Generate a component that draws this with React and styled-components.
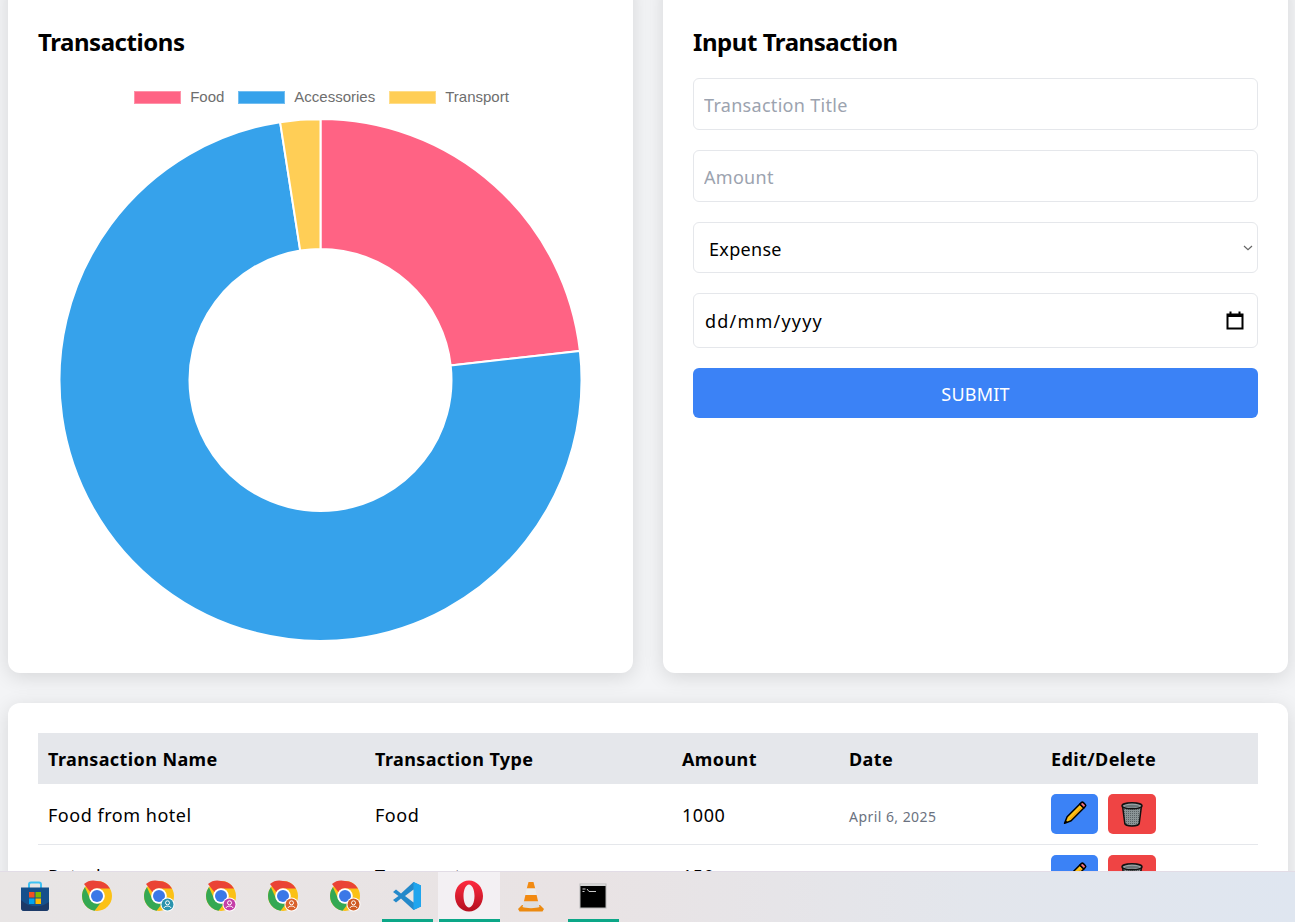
import React from "react";
import styled, { createGlobalStyle } from "styled-components";

const GlobalStyle = createGlobalStyle`
  html, body {
    margin: 0;
    height: 100%;
    overflow: hidden;
    background: #f3f4f6;
    font-family: "Noto Sans", "Open Sans", Arial, sans-serif;
    color: #000;
  }
  * { box-sizing: border-box; }
`;

const Page = styled.main`
  display: flex;
  flex-direction: column;
  gap: 30px;
  margin-top: -24px;
  padding: 0 7px 0 8px;
`;

const TopGrid = styled.div`
  display: grid;
  grid-template-columns: 625px 625px;
  gap: 30px;
`;

const Card = styled.section`
  background: #fff;
  border-radius: 12px;
  box-shadow: 0 4px 20px rgba(0, 0, 0, 0.12);
  padding: ${(p) => p.$padding || "30px"};
`;

const Heading = styled.h2`
  margin: 0 0 20px;
  font-size: 24px;
  line-height: 32px;
  font-weight: 700;
  letter-spacing: -0.45px;
`;

const ChartArea = styled.div`
  display: flex;
  flex-direction: column;
  align-items: center;
`;

const Legend = styled.div`
  display: flex;
  justify-content: center;
  gap: 14px;
  height: 42px;
  padding: 10px 0 0 2px;
  font-family: "Liberation Sans", Arial, sans-serif;
  font-size: 15px;
  color: #6e6e6e;
`;

const LegendItem = styled.div`
  display: flex;
  align-items: flex-start;
  gap: 9px;
  line-height: 17px;
`;

const LegendBox = styled.span`
  width: 47px;
  height: 13px;
  margin-top: 3px;
  background: ${(p) => p.$color};
  border: 1px solid rgba(255, 255, 255, 0.3);
`;

const Form = styled.form`
  display: flex;
  flex-direction: column;
  gap: 20px;
`;

const controlStyle = `
  width: 100%;
  border: 1px solid #e5e7eb;
  border-radius: 6px;
  background-color: #fff;
  padding: 11px 10px 9px;
  font-family: inherit;
  font-size: 18px;
  letter-spacing: 0.3px;
  color: #000;
  outline: none;
`;

const TextInput = styled.input`
  ${controlStyle}
  height: 52px;
  &::placeholder { color: #9ca3af; opacity: 1; }
`;

const chevron =
  "url(\"data:image/svg+xml,%3Csvg xmlns='http://www.w3.org/2000/svg' width='10' height='6' viewBox='0 0 10 6'%3E%3Cpath d='M1 1l4 3.600L9 1' fill='none' stroke='%23666' stroke-width='1.200'/%3E%3C/svg%3E\")";

const Select = styled.select`
  ${controlStyle}
  height: 51px;
  padding-left: 15px;
  appearance: none;
  background-image: ${chevron};
  background-repeat: no-repeat;
  background-position: right 4px center;
`;

const DateField = styled.div`
  ${controlStyle}
  height: 55px;
  display: flex;
  align-items: center;
  justify-content: space-between;
  padding: 0 13px 0 11px;
  letter-spacing: 1.2px;
`;

const SubmitButton = styled.button`
  height: 50px;
  padding: 2px 0 0;
  border: 0;
  border-radius: 6px;
  background: #3b82f6;
  color: #fff;
  font-family: inherit;
  font-size: 18px;
  letter-spacing: 0.2px;
  text-transform: uppercase;
`;

const Table = styled.table`
  width: 100%;
  border-collapse: collapse;
  table-layout: fixed;
`;

const Th = styled.th`
  width: ${(p) => p.$width}px;
  height: 51px;
  padding: 10px;
  background: #e5e7eb;
  font-size: 18px;
  font-weight: 700;
  letter-spacing: 0.4px;
  text-align: left;
`;

const Tr = styled.tr`
  border-bottom: 1px solid #e5e7eb;
`;

const Td = styled.td`
  height: 60px;
  padding: ${(p) => (p.$actions ? "10px" : "11px 10px 9px")};
  font-size: 18px;
  letter-spacing: 0.52px;
`;

const DateText = styled.span`
  font-size: 14px;
  letter-spacing: 0.45px;
  color: #6b7280;
`;

const Actions = styled.div`
  display: flex;
  gap: 10px;
`;

const ActionButton = styled.button`
  display: flex;
  align-items: center;
  justify-content: center;
  width: ${(p) => p.$width}px;
  height: 40px;
  padding: 0;
  border: 0;
  border-radius: 5px;
  background: ${(p) => p.$color};
`;

const Taskbar = styled.footer`
  position: fixed;
  left: 0;
  right: 0;
  bottom: 0;
  height: 51px;
  display: flex;
  padding-left: 4px;
  border-top: 1px solid #e2dce6;
  background: linear-gradient(90deg, #e8e5e5 0%, #e9e3e4 45%, #e3e6ec 75%, #dfe6f0 100%);
`;

const TaskItem = styled.div`
  position: relative;
  width: 62px;
  display: flex;
  align-items: center;
  justify-content: center;
  padding-bottom: 2px;
  background: ${(p) => (p.$active ? "#f3f0f3" : "transparent")};

  &::after {
    content: "";
    display: ${(p) => (p.$running || p.$active ? "block" : "none")};
    position: absolute;
    left: ${(p) => (p.$active ? "1px" : "6px")};
    right: ${(p) => (p.$active ? "0" : "5px")};
    bottom: 0;
    height: 3px;
    background: #0ca788;
  }
`;

const slices = [
  { label: "Food", color: "#ff6384", from: 0, to: 83.6 },
  { label: "Accessories", color: "#36a2eb", from: 83.6, to: 351.1 },
  { label: "Transport", color: "#ffce56", from: 351.1, to: 360 },
];

const rows = [
  { name: "Food from hotel", type: "Food", amount: "1000", date: "April 6, 2025" },
  { name: "Petrol", type: "Transport", amount: "150", date: "April 6, 2025" },
];

const point = (r, deg) => {
  const a = ((deg - 90) * Math.PI) / 180;
  return `${(260.5 + r * Math.cos(a)).toFixed(2)} ${(260 + r * Math.sin(a)).toFixed(2)}`;
};

const slicePath = ({ from, to }) => {
  const large = to - from > 180 ? 1 : 0;
  return `M${point(261, from)} A261 261 0 ${large} 1 ${point(261, to)} L${point(131, to)} A131 131 0 ${large} 0 ${point(131, from)} Z`;
};

const Donut = () => (
  <svg width="521" height="521" viewBox="0 0 521 521" style={{ display: "block" }}>
    {slices.map((s) => (
      <path key={s.label} d={slicePath(s)} fill={s.color} stroke="#fff" strokeWidth="2" />
    ))}
  </svg>
);

const CalendarIcon = () => (
  <svg width="18" height="19" viewBox="0 0 18 19">
    <path d="M1.500 3.500h15v14h-15z" fill="#fff" stroke="#000" strokeWidth="2" />
    <path d="M1 3h16v3H1z" fill="#000" />
    <path d="M4.500 0.500v3M13.500 0.500v3" stroke="#000" strokeWidth="2" />
  </svg>
);

const PencilIcon = () => (
  <svg width="28" height="28" viewBox="0 0 28 28">
    <g transform="rotate(45 14 14) translate(-0.800 0)">
      <path d="M11.200 3.500h5.600v18L14 28l-2.800-6.500z" fill="#fcc419" stroke="#000" strokeWidth="1.500" strokeLinejoin="round" />
      <path d="M15 4v17" stroke="#f59f0b" strokeWidth="1.200" />
      <path d="M11.200 3.500V1.500A1.500 1.500 0 0 1 12.700 0h2.600a1.500 1.500 0 0 1 1.500 1.500v2z" fill="#f4727f" stroke="#000" strokeWidth="1.500" />
      <path d="M12.800 25l1.200 3 1.200-3z" fill="#000" />
    </g>
  </svg>
);

const TrashIcon = () => (
  <svg width="24" height="26" viewBox="0 0 24 26">
    <defs>
      <pattern id="mesh" width="2" height="2" patternUnits="userSpaceOnUse">
        <rect width="2" height="2" fill="#8b9496" />
        <rect width="1" height="1" fill="#5a6265" />
      </pattern>
    </defs>
    <path d="M2.600 5.500l2.200 17c.3 1.600 3.300 2.400 7.200 2.400s6.900-.8 7.200-2.400l2.200-17z" fill="url(#mesh)" stroke="#111" strokeWidth="1.500" />
    <ellipse cx="12" cy="4.800" rx="10" ry="3" fill="#9aa3a5" stroke="#111" strokeWidth="1.500" />
    <ellipse cx="12" cy="5.200" rx="7.500" ry="1.500" fill="#6b7477" />
  </svg>
);

const StoreIcon = () => (
  <svg width="30" height="32" viewBox="0 0 30 32">
    <path d="M9 9V4.500A2 2 0 0 1 11 2.500h8a2 2 0 0 1 2 2V9" fill="none" stroke="#3ec1f3" strokeWidth="2" />
    <path d="M1 7.500h28v20a3.500 3.500 0 0 1-3.500 3.500h-21A3.500 3.500 0 0 1 1 27.500z" fill="#15508c" />
    <path d="M1 20c8 8 20 8 28 2v5.500a3.500 3.500 0 0 1-3.500 3.500h-21A3.500 3.500 0 0 1 1 27.500z" fill="#1c3a68" />
    <rect x="9" y="12" width="5.500" height="5.500" fill="#f25022" />
    <rect x="15.500" y="12" width="5.500" height="5.500" fill="#7fba00" />
    <rect x="9" y="18.500" width="5.500" height="5.500" fill="#00a4ef" />
    <rect x="15.500" y="18.500" width="5.500" height="5.500" fill="#ffb900" />
  </svg>
);

const ChromeIcon = ({ badge }) => (
  <svg width="32" height="32" viewBox="0 0 32 32">
    <circle cx="16" cy="16" r="15" fill="#fbc116" />
    <path d="M16 1a15 15 0 0 1 13 7.500H16a7.500 7.500 0 0 0-6.500 3.750L3 3.900 A15 15 0 0 1 16 1z" fill="#ea4335" />
    <path d="M3.900 7.200a15 15 0 0 0 9.700 23.600l6.300-8.400a7.500 7.500 0 0 1-10.400-3z" fill="#34a853" />
    <circle cx="16" cy="16" r="7.800" fill="#fff" />
    <circle cx="16" cy="16" r="6" fill="#3b78e7" />
    {badge && (
      <g>
        <circle cx="24.500" cy="24.500" r="7" fill="#fff" />
        <circle cx="24.500" cy="24.500" r="6" fill={badge} />
        <circle cx="24.500" cy="22.800" r="2" fill="none" stroke="#fff" strokeWidth="1" />
        <path d="M21 28c.5-2.500 6.500-2.500 7 0" fill="none" stroke="#fff" strokeWidth="1" />
      </g>
    )}
  </svg>
);

const VsCodeIcon = () => (
  <svg width="30" height="30" viewBox="0 0 30 30">
    <path d="M21.500 1L29 4.500v21L21.500 29 9 17.500l-5 4-3-2.500 5.500-4L1 11l3-2.500 5 4z" fill="#2489ca" />
    <path d="M21.500 1L29 4.500v21L21.500 29z" fill="#1fa5ee" />
    <path d="M21.500 8.500v13L13 15z" fill="#e8e5e5" />
  </svg>
);

const OperaIcon = () => (
  <svg width="30" height="32" viewBox="0 0 30 32">
    <defs>
      <linearGradient id="opera" x1="0" y1="0" x2="0" y2="1">
        <stop offset="0" stopColor="#ff2a3f" />
        <stop offset="1" stopColor="#b3101f" />
      </linearGradient>
    </defs>
    <path
      fillRule="evenodd"
      d="M15 .5C7 .5 1 7.500 1 16s6 15.500 14 15.500S29 24.500 29 16 23 .5 15 .5zM15 4.500c3 0 5.500 5 5.500 11.500S18 27.500 15 27.500 9.500 22.500 9.500 16 12 4.500 15 4.500z"
      fill="url(#opera)"
    />
  </svg>
);

const ConeIcon = () => (
  <svg width="28" height="31" viewBox="0 0 28 31">
    <path d="M1 28l4-4h18l4 4-1.500 2.500h-23z" fill="#ec8a10" />
    <path d="M11.500 1h5l1.700 6.500H9.800z" fill="#f28a12" />
    <path d="M9.800 7.500h8.400l1.400 6.500H8.400z" fill="#ececec" />
    <path d="M8.400 14h11.200l1.500 6.500H6.900z" fill="#f28a12" />
    <path d="M6.900 20.500h14.200l1.400 5.500c-3 1.500-14 1.500-17 0z" fill="#dedede" />
  </svg>
);

const TerminalIcon = () => (
  <svg width="28" height="26" viewBox="0 0 28 26">
    <rect x="0.500" y="0.500" width="27" height="25" fill="#b9b9b9" />
    <rect x="1.500" y="3" width="25" height="21.500" fill="#000" />
    <rect x="1.500" y="1" width="25" height="2" fill="#d4d4d4" />
    <path d="M3.500 6h3M3.500 8.500h2M8 6l2 2.500h7" stroke="#c9c9c9" strokeWidth="1" fill="none" />
  </svg>
);

const taskItems = [
  { id: "store", icon: <StoreIcon /> },
  { id: "chrome", icon: <ChromeIcon /> },
  { id: "chrome-teal", icon: <ChromeIcon badge="#2a93ad" /> },
  { id: "chrome-pink", icon: <ChromeIcon badge="#c43fa8" /> },
  { id: "chrome-orange", icon: <ChromeIcon badge="#d9622b" /> },
  { id: "chrome-rust", icon: <ChromeIcon badge="#cf5a24" /> },
  { id: "vscode", icon: <VsCodeIcon />, running: true },
  { id: "opera", icon: <OperaIcon />, active: true },
  { id: "vlc", icon: <ConeIcon /> },
  { id: "terminal", icon: <TerminalIcon />, running: true },
];

export default function App() {
  return (
    <>
      <GlobalStyle />
      <Page>
        <TopGrid>
          <Card $padding="50px 30px 32px">
            <Heading>Transactions</Heading>
            <ChartArea>
              <Legend>
                {slices.map((s) => (
                  <LegendItem key={s.label}>
                    <LegendBox $color={s.color} />
                    {s.label}
                  </LegendItem>
                ))}
              </Legend>
              <Donut />
            </ChartArea>
          </Card>
          <Card $padding="50px 30px 32px">
            <Heading>Input Transaction</Heading>
            <Form>
              <TextInput type="text" placeholder="Transaction Title" />
              <TextInput type="text" placeholder="Amount" />
              <Select defaultValue="Expense">
                <option>Expense</option>
                <option>Income</option>
              </Select>
              <DateField>
                dd/mm/yyyy
                <CalendarIcon />
              </DateField>
              <SubmitButton type="button">Submit</SubmitButton>
            </Form>
          </Card>
        </TopGrid>
        <Card>
          <Table>
            <thead>
              <tr>
                <Th $width={327}>Transaction Name</Th>
                <Th $width={307}>Transaction Type</Th>
                <Th $width={167}>Amount</Th>
                <Th $width={202}>Date</Th>
                <Th $width={217}>Edit/Delete</Th>
              </tr>
            </thead>
            <tbody>
              {rows.map((row) => (
                <Tr key={row.name}>
                  <Td>{row.name}</Td>
                  <Td>{row.type}</Td>
                  <Td>{row.amount}</Td>
                  <Td>
                    <DateText>{row.date}</DateText>
                  </Td>
                  <Td $actions>
                    <Actions>
                      <ActionButton type="button" $color="#3b82f6" $width={47}>
                        <PencilIcon />
                      </ActionButton>
                      <ActionButton type="button" $color="#ef4444" $width={48}>
                        <TrashIcon />
                      </ActionButton>
                    </Actions>
                  </Td>
                </Tr>
              ))}
            </tbody>
          </Table>
        </Card>
      </Page>
      <Taskbar>
        {taskItems.map((item) => (
          <TaskItem key={item.id} $active={item.active} $running={item.running}>
            {item.icon}
          </TaskItem>
        ))}
      </Taskbar>
    </>
  );
}
